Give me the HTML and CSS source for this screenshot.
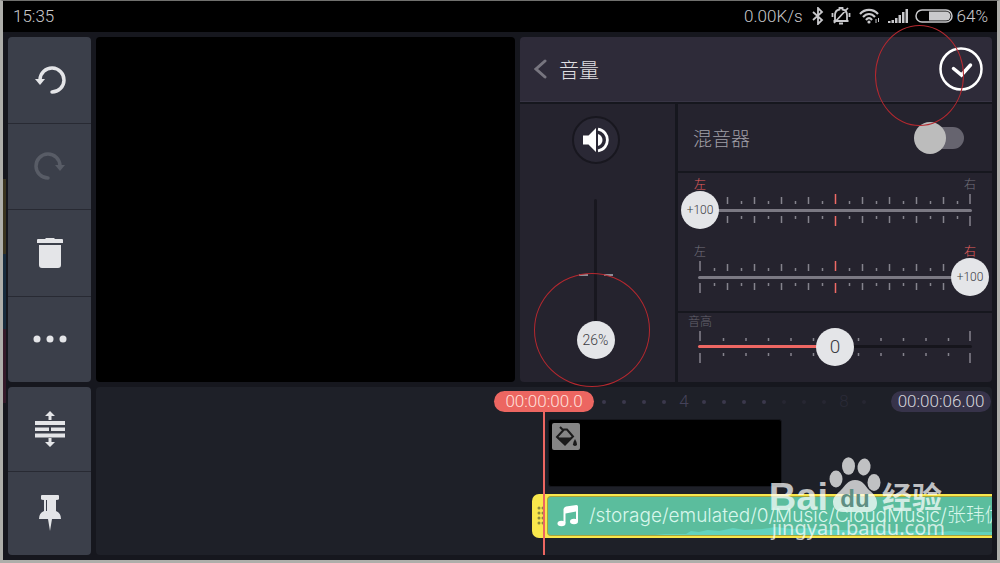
FILE: index.html
```html
<!DOCTYPE html>
<html lang="zh-CN">
<head>
  <meta charset="UTF-8">
  <meta name="viewport" content="width=device-width, initial-scale=1.0">
  <title>音量</title>

  <link rel="stylesheet" href="styles.css">
</head>
<body>
  <div class="screen">
    <header class="status-bar">
      <time class="clock">15:35</time>
      <span class="speed">0.00K/s</span>
      <svg class="bluetooth" width="12" height="18" viewBox="0 0 12 18" fill="none" stroke="currentColor" stroke-width="1.8">
        <path d="M1 5l9 8-4 4V1l4 4-9 8"/>
      </svg>
      <svg class="bell" width="20" height="18" viewBox="0 0 20 18" fill="none" stroke="currentColor" stroke-width="1.8">
        <path d="M4 14V8c0-3 2-5 4.500-5.500V1h3v1.500C14 3 16 5 16 8v6M2.500 14h15M8 16.500h4M1.500 6v4M18.500 6v4M17 1L3 16"/>
      </svg>
      <svg class="wifi" width="21" height="16" viewBox="0 0 21 16" fill="none" stroke="currentColor" stroke-width="2.2">
        <path d="M1 6c5-5.500 13-5.500 18 0M4 9c3.500-4 8.500-4 12 0M7 12c2-2.500 4-2.500 6 0"/>
        <circle cx="10" cy="14" r="1.600" fill="currentColor" stroke="none"/>
        <path d="M17 11v4M19.500 10v4" stroke-width="1"/>
      </svg>
      <svg class="signal" width="20" height="14" viewBox="0 0 20 14" fill="currentColor">
        <path d="M0 12h2.500v2H0zM3.500 11H6v3H3.500zM7 9h2.500v5H7zM10.500 6H13v8h-2.500zM14 3h2.500v11H14zM17.500 0H20v14h-2.500z"/>
      </svg>
      <svg class="battery" width="38" height="14" viewBox="0 0 38 14">
        <rect x="1" y="1" width="36" height="12" rx="6" fill="none" stroke="currentColor" stroke-width="1.500"/>
        <path d="M14 2.500h17a4.500 4.500 0 0 1 0 9H14z" fill="currentColor"/>
      </svg>
      <span>64%</span>
    </header>

    <main class="editor">
      <nav class="tools">
        <button class="tool" aria-label="撤销">
          <svg width="32" height="30" viewBox="0 0 32 30" fill="none" stroke="currentColor" stroke-width="3.5">
            <path d="M6 14.500A12 12 0 1 1 18 27" stroke-linecap="round"/>
            <path d="M1 14h10l-5 6z" fill="currentColor" stroke="none"/>
          </svg>
        </button>
        <button class="tool" aria-label="重做" disabled>
          <svg width="32" height="30" viewBox="0 0 32 30" fill="none" stroke="currentColor" stroke-width="3.5">
            <path d="M26 14.500A12 12 0 1 0 14 27" stroke-linecap="round"/>
            <path d="M21 14h10l-5 6z" fill="currentColor" stroke="none"/>
          </svg>
        </button>
        <button class="tool" aria-label="删除">
          <svg width="26" height="30" viewBox="0 0 26 30" fill="currentColor">
            <path d="M1 1h7l1-1h8l1 1h7q1 0 1 1v3H0V2q0-1 1-1zM2 7h22v20q0 3-3 3H5q-3 0-3-3z"/>
          </svg>
        </button>
        <button class="tool" aria-label="更多">
          <svg width="34" height="8" viewBox="0 0 34 8" fill="currentColor">
            <circle cx="4" cy="4" r="3.500"/><circle cx="17" cy="4" r="3.500"/><circle cx="30" cy="4" r="3.500"/>
          </svg>
        </button>
      </nav>

      <section class="preview" aria-label="预览"></section>

      <section class="panel">
        <div class="panel-header">
          <button class="back" aria-label="返回">
            <svg width="13" height="20" viewBox="0 0 13 20" fill="none" stroke="currentColor" stroke-width="3" stroke-linecap="round">
              <path d="M11 2L2 10l9 8"/>
            </svg>
          </button>
          <h1>音量</h1>
          <button class="confirm" aria-label="确定">
            <svg width="44" height="44" viewBox="0 0 44 44" fill="none" stroke="currentColor">
              <circle cx="22" cy="22" r="20.500" stroke-width="2.500"/>
              <path d="M14.500 21.500l8 6.500L31.500 18" stroke-width="3.500" stroke-linecap="round"/>
            </svg>
          </button>
        </div>

        <div class="panel-body">
          <div class="volume">
            <button class="mute" aria-label="静音">
              <svg width="28" height="26" viewBox="0 0 28 26" fill="currentColor">
                <path d="M1 8.500h5.500L14 1v24l-7.500-7.500H1z"/>
                <path d="M16 7c6 2 6 10 0 12z"/>
                <path d="M16 2.200c12.500 2 12.500 19.600 0 21.600" fill="none" stroke="currentColor" stroke-width="2.800"/>
              </svg>
            </button>
            <div class="fader">
              <div class="fader-track"></div>
              <div class="fader-marks"></div>
              <input type="range" min="26" max="200" value="26" aria-label="音量">
              <output>26%</output>
            </div>
          </div>

          <div class="settings">
            <label class="mixer">
              <span>混音器</span>
              <input type="checkbox" class="switch">
            </label>

            <div class="pan">
              <div class="channel">
                <div class="ends"><span class="active">左</span><span>右</span></div>
                <div class="slider at-start">
                  <svg class="ticks" viewBox="0 0 274 32" aria-hidden="true">
                    <use href="#pan-ticks"/>
                  </svg>
                  <div class="track"></div>
                  <input type="range" min="-100" max="100" value="-100" aria-label="左声道">
                  <output>+100</output>
                </div>
              </div>
              <div class="channel">
                <div class="ends"><span>左</span><span class="active">右</span></div>
                <div class="slider at-end">
                  <svg class="ticks" viewBox="0 0 274 32" aria-hidden="true">
                    <g id="pan-ticks" fill="none" stroke-width="1.500">
                      <path class="tick-line" d="M2 0v10M2 22v10M272 0v10M272 22v10"/>
                      <path class="tick-line" d="M29.500 3v7m27-7v7m27-7v7m27-7v7m54-7v7m27-7v7m27-7v7m27-7v7M29.500 22v7m27-7v7m27-7v7m27-7v7m54-7v7m27-7v7m27-7v7m27-7v7"/>
                      <path class="tick-line" d="M16.500 7v3m27-3v3m27-3v3m27-3v3m27-3v3m27-3v3m27-3v3m27-3v3m27-3v3m27-3v3M16.500 22v3m27-3v3m27-3v3m27-3v3m27-3v3m27-3v3m27-3v3m27-3v3m27-3v3m27-3v3"/>
                      <path class="tick-center" d="M137.500 0v10M137.500 22v10"/>
                    </g>
                  </svg>
                  <div class="track"></div>
                  <input type="range" min="-100" max="100" value="100" aria-label="右声道">
                  <output>+100</output>
                </div>
              </div>
            </div>

            <div class="pitch">
              <label for="pitch">音高</label>
              <div class="slider at-middle">
                <svg class="ticks" viewBox="0 0 274 32" fill="none" stroke-width="1.500" aria-hidden="true">
                  <path class="tick-line" d="M2 0v10M2 22v10M272 0v10M272 22v10"/>
                  <path class="tick-line" d="M25.500 7v3m22.500-3v3m22.500-3v3m22.500-3v3m22.500-3v3m45-3v3m22.500-3v3m22.500-3v3m22.500-3v3m22.500-3v3M25.500 22v3m22.500-3v3m22.500-3v3m22.500-3v3m22.500-3v3m45-3v3m22.500-3v3m22.500-3v3m22.500-3v3m22.500-3v3"/>
                </svg>
                <div class="track"></div>
                <input type="range" id="pitch" min="-12" max="12" value="0">
                <output>0</output>
              </div>
            </div>
          </div>
        </div>

        <div class="ring ring-confirm"></div>
        <div class="ring ring-volume"></div>
      </section>

      <nav class="tools">
        <button class="tool" aria-label="展开轨道">
          <svg width="30" height="36" viewBox="0 0 30 36" fill="currentColor">
            <path d="M15 0l5 5h-3.500v4h-3V5H10zM15 36l5-5h-3.500v-4h-3v4H10z"/>
            <path d="M0 10h30v4H0zM0 16.500h14v3.500H0zM16 16.500h14v3.500H16zM0 22.500h30v4H0z"/>
          </svg>
        </button>
        <button class="tool" aria-label="固定">
          <svg width="24" height="36" viewBox="0 0 24 36" fill="currentColor">
            <path d="M4 0h16q1 0 1 1v3q0 1-3 1v11q5 2 5 8h-9l-2 12-2-12H1q0-6 5-8V5Q3 5 3 4V1q0-1 1-1z"/>
            <path class="pin-slot" d="M8.500 5v11"/>
          </svg>
        </button>
      </nav>

      <section class="timeline">
        <div class="ruler">
          <span class="timecode current">00:00:00.0</span>
          <ol class="seconds">
            <li></li><li></li><li></li><li></li><li>4</li>
            <li></li><li></li><li></li><li></li>
            <li class="dim"></li><li class="dim"></li><li class="dim"></li><li class="dim">8</li><li class="dim"></li>
          </ol>
          <span class="timecode total">00:00:06.00</span>
        </div>

        <div class="clip">
          <span class="clip-badge">
            <svg width="22" height="22" viewBox="0 0 22 22">
              <path d="M5 1l4 4M9 3.500L2 11l8 7.500 8-8L12 3.500z" fill="none" stroke="currentColor" stroke-width="2"/>
              <path d="M2 11.500h15.500L10 19z" fill="currentColor"/>
              <path d="M20 13q4 7 0 7t0-7z" fill="currentColor"/>
            </svg>
          </span>
        </div>

        <div class="audio">
          <div class="handle">
            <svg width="8" height="22" viewBox="0 0 8 22" fill="currentColor">
              <circle cx="2" cy="3" r="1.500"/><circle cx="2" cy="8" r="1.500"/><circle cx="2" cy="13" r="1.500"/><circle cx="2" cy="18" r="1.500"/>
              <circle cx="6" cy="3" r="1.500"/><circle cx="6" cy="8" r="1.500"/><circle cx="6" cy="13" r="1.500"/><circle cx="6" cy="18" r="1.500"/>
            </svg>
          </div>
          <div class="audio-body">
            <svg class="note" width="22" height="22" viewBox="0 0 22 22" fill="currentColor">
              <path d="M6.500 4Q7 2 9 1.500L19.500 0Q21 0 21 1.500V16h-2V6.500L8.500 8.500V18h-2z"/>
              <ellipse cx="4.500" cy="18.500" rx="4" ry="2.800"/><ellipse cx="17" cy="16.500" rx="4" ry="2.800"/>
            </svg>
            <span class="path">/storage/emulated/0/Music/CloudMusic/张玮伽</span>
            <svg class="wave" viewBox="0 0 445 8" preserveAspectRatio="none">
              <path d="M100 8l10-1 22 0 5-3 8 1 9-2 12 1 14-3 12 2 18-1 14-2 16 2 20-1 12 2 20 0 14 1 20-1 26 2 18-1 14 2 18-2 20 1 33 0v3z"/>
            </svg>
          </div>
        </div>

        <div class="playhead"></div>

        <div class="watermark">
          <div class="brand">
            <span class="bai">Bai</span>
            <svg width="54" height="56" viewBox="0 0 54 56" fill="currentColor">
              <ellipse cx="8" cy="22" rx="6.500" ry="8.500"/>
              <ellipse cx="20.500" cy="9" rx="6.500" ry="8.800"/>
              <ellipse cx="36" cy="10" rx="6.500" ry="8.500" transform="rotate(8 36 10)"/>
              <ellipse cx="46" cy="25.500" rx="6.500" ry="8.500"/>
              <path d="M27 23c8 0 10 6 14 10 5 4 8 8 8 13 0 6-4 9-9 9H15c-6 0-10-4-10-10 0-5 4-8 8-12s7-10 14-10z"/>
              <text x="27" y="50" class="du">du</text>
            </svg>
            <span class="jingyan">经验</span>
          </div>
          <div class="site">jingyan.baidu.com</div>
        </div>
      </section>
    </main>
  </div>
</body>
</html>
```
FILE: styles.css
```css
* {
  box-sizing: border-box;
}

body {
  margin: 0;
  font-family: Roboto, 'Noto Sans CJK SC', sans-serif;
  font-weight: 300;
  font-size: 17px;
  color: #c9c9cc;
}

button {
  margin: 0;
  padding: 0;
  border: 0;
  background: none;
  color: inherit;
  cursor: pointer;
}

svg {
  display: block;
  flex: none;
}

.screen {
  display: flex;
  flex-direction: column;
  min-height: 100vh;
  border: 3px solid #aeaeaa;
  border-top: 1px solid #70706e;
  background: #16171e;
}

/* status bar */

.status-bar {
  display: flex;
  align-items: center;
  height: 31px;
  padding: 0 9px 2px 10px;
  background: #000;
}

.clock {
  margin-right: auto;
}

.bluetooth {
  margin-left: 9px;
}

.bell {
  margin-left: 7px;
}

.wifi {
  margin-left: 8px;
}

.signal {
  margin-left: 8px;
}

.battery {
  margin: 0 4px 0 7px;
}

/* editor */

.editor {
  display: grid;
  flex: 1;
  grid-template-columns: 83px minmax(0, 419fr) minmax(0, 472fr);
  grid-template-rows: 345fr 168fr;
  gap: 5px;
  padding: 5px;
  background: linear-gradient(#16171e 147px, #3a3420 147px, #3a3420 222px, #172b3d 222px, #172b3d 297px, #351a2a 297px, #351a2a 371px, #16171e 371px) no-repeat left top / 3px 100%;
}

.tools {
  display: flex;
  flex-direction: column;
  border-radius: 4px;
  overflow: hidden;
  background: #3b3f4a;
}

.tool {
  display: flex;
  flex: 1;
  align-items: center;
  justify-content: center;
  color: #e4e5e8;
}

.tool:not(:last-child) {
  border-bottom: 1px solid #282a33;
}

.tool:disabled {
  color: #585c66;
}

.pin-slot {
  stroke: #3b3f4a;
  stroke-width: 1;
}

.preview {
  border-radius: 4px;
  background: #000;
}

/* volume panel */

.panel {
  display: flex;
  flex-direction: column;
  position: relative;
}

.panel-header {
  display: flex;
  align-items: center;
  height: 65px;
  padding: 0 9px 0 14px;
  border-radius: 4px 4px 0 0;
  border-bottom: 1px solid #383545;
  background: #2e2b39;
}

.back {
  color: #77757f;
}

.panel-header h1 {
  margin: 0 auto 0 12px;
  font-size: 20px;
  font-weight: 300;
  color: #e0e0e4;
}

.confirm {
  color: #fff;
}

.panel-body {
  display: grid;
  flex: 1;
  grid-template-columns: minmax(0, 155fr) minmax(0, 314fr);
  gap: 3px;
  padding-top: 2px;
}

.volume {
  display: flex;
  flex-direction: column;
  align-items: center;
  padding: 12px 4px 0 0;
  border-radius: 0 0 0 4px;
  background: #25232e;
}

.mute {
  display: flex;
  align-items: center;
  justify-content: center;
  width: 48px;
  height: 48px;
  border: 2px solid #18171f;
  border-radius: 50%;
  background: #2a2835;
  color: #fff;
}

.fader,
.slider {
  display: grid;
  align-items: center;
}

.fader > *,
.slider > * {
  grid-area: 1 / 1;
}

.fader {
  justify-items: center;
  width: 38px;
  height: 160px;
  margin-top: 35px;
}

.fader-track {
  width: 3px;
  height: 100%;
  border-radius: 2px;
  background: #18171f;
}

.fader-marks {
  align-self: start;
  width: 34px;
  height: 2px;
  margin-top: 75px;
  background: linear-gradient(90deg, #8d8c94 9px, transparent 9px, transparent 25px, #8d8c94 25px);
}

input[type=range] {
  appearance: none;
  width: 100%;
  height: 38px;
  margin: 0;
  background: none;
}

.fader input[type=range] {
  writing-mode: vertical-lr;
  direction: rtl;
  width: 38px;
  height: 100%;
}

input[type=range]::-webkit-slider-thumb {
  appearance: none;
  width: 38px;
  height: 38px;
  border-radius: 50%;
  background: #e4e5e8;
}

output {
  width: 38px;
  line-height: 38px;
  font-size: 12px;
  text-align: center;
  color: #3b3b42;
  pointer-events: none;
}

.fader output {
  align-self: end;
  font-size: 14px;
}

.settings {
  display: grid;
  grid-template-rows: 67fr 137fr 69fr;
  gap: 2px;
}

.mixer,
.pan,
.pitch {
  background: #25232e;
}

.mixer {
  display: flex;
  align-items: center;
  justify-content: space-between;
  padding: 0 28px 0 15px;
  font-size: 19px;
  color: #a09fa7;
}

.switch {
  display: grid;
  align-items: center;
  appearance: none;
  width: 50px;
  height: 32px;
  margin: 0;
}

.switch::before,
.switch::after {
  content: '';
  grid-area: 1 / 1;
}

.switch::before {
  justify-self: end;
  width: 40px;
  height: 22px;
  border-radius: 11px;
  background: #66646f;
}

.switch::after {
  width: 32px;
  height: 32px;
  border-radius: 50%;
  background: #bcbcbc;
}

.switch:checked::after {
  justify-self: end;
}

.pan {
  display: flex;
  flex-direction: column;
  gap: 17px;
  padding: 6px 3px 0;
}

.ends {
  display: flex;
  justify-content: space-between;
  padding: 0 13px;
  font-size: 12px;
  line-height: 12px;
  color: #74727d;
}

.ends .active {
  color: #e8605f;
}

.ticks {
  justify-self: center;
  width: calc(100% - 34px);
}

.tick-line {
  stroke: #85838d;
}

.tick-center {
  stroke: #ef6a66;
}

.track {
  height: 3px;
  margin: 0 17px;
  border-radius: 2px;
  background: #7b7983;
}

.at-middle .track {
  background: linear-gradient(90deg, #ee6763 50%, #16151c 50%);
}

.at-middle output {
  justify-self: center;
  font-size: 19px;
}

.at-end output {
  justify-self: end;
}

.pitch {
  padding: 3px 3px 0;
  border-radius: 0 0 4px 0;
}

.pitch label {
  display: block;
  padding-left: 7px;
  font-size: 12px;
  line-height: 12px;
  color: #66646f;
}

/* callout circles over the panel */

.ring {
  position: absolute;
  border: 1px solid #b5282f;
  border-radius: 50%;
  pointer-events: none;
}

.ring-confirm {
  top: -12px;
  right: 28px;
  width: 89px;
  height: 101px;
}

.ring-volume {
  top: 236px;
  left: 14px;
  width: 116px;
  height: 114px;
}

/* timeline */

.timeline {
  display: flex;
  flex-direction: column;
  grid-column: 2 / 4;
  gap: 7px;
  position: relative;
  min-width: 0;
  padding-top: 4px;
  border-radius: 4px;
  background: #1e2028;
}

.ruler {
  display: flex;
  align-items: center;
  padding: 0 1px 0 calc(50% - 50px);
}

.timecode {
  flex: none;
  width: 100px;
  border-radius: 11px;
  line-height: 21px;
  text-align: center;
  color: #d6d5dc;
  background: #37334a;
}

.timecode.current {
  color: #ffe0dc;
  background: #ec6661;
}

.seconds {
  display: flex;
  flex: 1;
  align-items: center;
  min-width: 0;
  margin: 0;
  padding: 0;
  overflow: hidden;
  list-style: none;
  line-height: 21px;
  color: #45425a;
}

.seconds li {
  flex: 0 0 20px;
  text-align: center;
}

.seconds li:empty::before {
  content: '';
  display: block;
  width: 4px;
  height: 4px;
  margin: 0 auto;
  border-radius: 50%;
  background: #3b384c;
}

.seconds .dim {
  opacity: 0.3;
}

.clip {
  width: 234px;
  height: 68px;
  margin-left: calc(50% + 4px);
  padding: 3px;
  border: 1px solid #15161c;
  border-radius: 3px;
  background: #000;
}

.clip-badge {
  display: flex;
  align-items: center;
  justify-content: center;
  width: 28px;
  height: 27px;
  border-radius: 2px;
  background: #858585;
  color: #1b1b1b;
}

.audio {
  display: flex;
  height: 44px;
  margin-left: calc(50% - 12px);
  padding: 2px 0;
  border-radius: 7px 0 0 7px;
  background: #f8e74c;
}

.handle {
  display: flex;
  align-items: center;
  justify-content: end;
  width: 15px;
  padding-right: 2px;
  color: #8c8a3d;
}

.audio-body {
  display: grid;
  flex: 1;
  grid-template-columns: auto minmax(0, 1fr);
  align-items: center;
  min-width: 0;
  padding-left: 9px;
  border: 1px solid #a9a43c;
  border-right: 0;
  border-radius: 4px 0 0 4px;
  background: #5bbd9d;
}

.note {
  grid-area: 1 / 1;
  color: #fff;
}

.path {
  grid-area: 1 / 2;
  z-index: 1;
  padding-left: 10px;
  overflow: hidden;
  white-space: nowrap;
  font-family: Inter, 'Noto Sans CJK SC', sans-serif;
  font-size: 19px;
  line-height: 28px;
  color: #d8f7ec;
}

.wave {
  grid-area: 1 / 1 / 2 / 3;
  align-self: end;
  width: 100%;
  height: 8px;
  fill: #63d3bd;
}

.playhead {
  position: absolute;
  top: 24px;
  bottom: 0;
  left: calc(50% - 1px);
  width: 2px;
  background: #ec6661;
}

.watermark {
  position: absolute;
  top: 70px;
  right: 47px;
  color: rgba(255, 255, 255, 0.72);
}

.brand {
  display: flex;
  align-items: flex-end;
  justify-content: flex-end;
  padding-right: 3px;
}

.bai {
  font: bold 38px/32px 'Liberation Sans', sans-serif;
}

.du {
  font: bold 24px 'Liberation Sans', sans-serif;
  text-anchor: middle;
  fill: #5f8f83;
}

.jingyan {
  font-weight: 700;
  font-size: 30px;
  line-height: 31px;
}

.site {
  font-family: 'Noto Sans', sans-serif;
  font-weight: 400;
  font-size: 20px;
  line-height: 30px;
  text-align: right;
}
```
